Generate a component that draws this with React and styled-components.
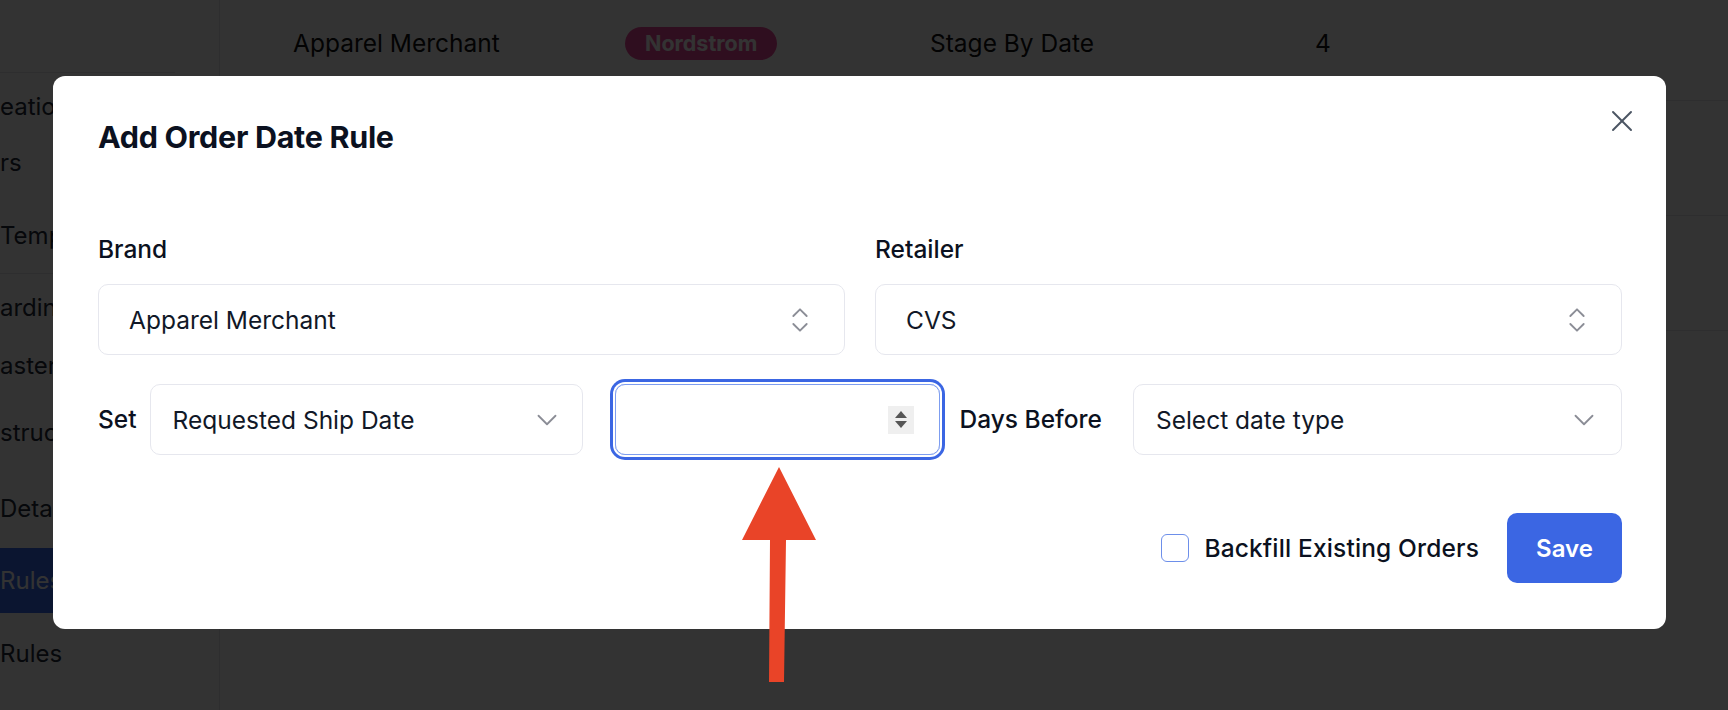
import React from 'react';
import styled, { createGlobalStyle } from 'styled-components';
import { X, ChevronsUpDown, ChevronDown } from 'lucide-react';

const GlobalStyle = createGlobalStyle`
  * { box-sizing: border-box; }
  body {
    margin: 0;
    font-family: Inter, "Noto Sans", sans-serif;
    color: #111827;
    overflow: hidden;
  }
`;

const Page = styled.div`
  position: relative;
  display: flex;
  width: 1728px;
  height: 710px;
  background: #ffffff;
  overflow: hidden;
`;

const Sidebar = styled.div`
  width: 220px;
  flex-shrink: 0;
  border-right: 1px solid #e5e7eb;
  padding-top: 72px;
  overflow: hidden;
`;

const SideGroup = styled.div`
  border-top: 1px solid #e5e7eb;
  margin-right: 44px;
  padding-bottom: 18px;
`;

const SideItem = styled.div`
  display: flex;
  align-items: center;
  height: ${p => (p.$active ? 65 : 40)}px;
  margin-top: ${p => p.$mt}px;
  margin-right: ${p => (p.$active ? -44 : 0)}px;
  font-size: 24px;
  white-space: nowrap;
  color: ${p => (p.$active ? '#ffffff' : '#1f2937')};
  background: ${p => (p.$active ? '#3769f0' : 'transparent')};
`;

const Main = styled.div`
  flex: 1;
  margin-top: -14px;
`;

const Row = styled.div`
  display: grid;
  grid-template-columns: 332px 305px 385px 1fr;
  align-items: center;
  height: 115px;
  padding-left: 73px;
  border-bottom: 1px solid #e5e7eb;
  font-size: 24.5px;
  color: #111111;
`;

const Badge = styled.span`
  justify-self: start;
  display: inline-flex;
  align-items: center;
  height: 33px;
  padding: 0 20px;
  border-radius: 17px;
  background: #ec4899;
  color: #ffffff;
  font-weight: 700;
  font-size: 21.5px;
`;

const Overlay = styled.div`
  position: absolute;
  inset: 0;
  background: rgba(0, 0, 0, 0.8);
  display: flex;
  align-items: flex-start;
  padding: 76px 0 0 53px;
`;

const Modal = styled.div`
  position: relative;
  width: 1613px;
  height: 553px;
  background: #ffffff;
  border-radius: 12px;
  padding: 43px 44px 45px 45px;
  display: flex;
  flex-direction: column;
`;

const CloseButton = styled.button`
  position: absolute;
  top: 27px;
  right: 26px;
  display: flex;
  padding: 0;
  border: none;
  background: none;
  color: #4b5563;
`;

const Title = styled.h2`
  margin: 0;
  font-size: 30.5px;
  line-height: 36px;
  font-weight: 700;
  color: #0b1120;
  letter-spacing: -0.3px;
`;

const TwoCols = styled.div`
  display: grid;
  grid-template-columns: 1fr 1fr;
  gap: 30px;
  margin-top: 80px;
`;

const Field = styled.div`
  display: flex;
  flex-direction: column;
  gap: 20px;
`;

const Label = styled.span`
  font-size: 24.5px;
  line-height: 29px;
  font-weight: 500;
  color: #0b1120;
  white-space: nowrap;
  margin-right: ${p => p.$mr || 0}px;
`;

const Select = styled.div`
  display: flex;
  align-items: center;
  justify-content: space-between;
  height: 71px;
  flex-shrink: 0;
  width: ${p => (p.$w ? `${p.$w}px` : 'auto')};
  flex-grow: ${p => (p.$grow ? 1 : 0)};
  padding: 0 ${p => p.$pr}px 0 ${p => p.$pl}px;
  border: 1px solid #e6e7ee;
  border-radius: 10px;
  background: #ffffff;
  font-size: 24.5px;
  color: #111827;
  white-space: nowrap;
  svg { color: #8b8d96; flex-shrink: 0; }
`;

const SetRow = styled.div`
  display: flex;
  align-items: center;
  margin-top: 29px;
`;

const NumberField = styled.div`
  display: flex;
  align-items: center;
  justify-content: flex-end;
  flex-shrink: 0;
  width: 325px;
  height: 71px;
  margin: 0 20px 0 32px;
  padding-right: 25px;
  border: 1px solid #7d9df0;
  border-radius: 10px;
  box-shadow: 0 0 0 2px #ffffff, 0 0 0 5px #3b66e3;
`;

const Spinner = styled.div`
  display: flex;
  flex-direction: column;
  align-items: center;
  justify-content: center;
  gap: 3px;
  width: 26px;
  height: 28px;
  background: #efefef;
`;

const Footer = styled.div`
  display: flex;
  align-items: center;
  justify-content: flex-end;
  margin-top: 58px;
`;

const Checkbox = styled.span`
  width: 28px;
  height: 28px;
  border: 1.5px solid #6d8fea;
  border-radius: 6px;
  margin-right: 15px;
`;

const CheckLabel = styled.span`
  font-size: 24.5px;
  font-weight: 500;
  color: #0b1120;
  margin-right: 28px;
  letter-spacing: 0.15px;
`;

const SaveButton = styled.button`
  width: 115px;
  height: 70px;
  border: none;
  border-radius: 10px;
  background: #3b66e3;
  color: #ffffff;
  font-family: inherit;
  font-size: 24px;
  font-weight: 600;
`;

const ArrowSvg = styled.svg`
  position: absolute;
  left: 735px;
  top: 460px;
`;

const sideGroups = [
  [
    { text: 'eatio', mt: 13 },
    { text: 'rs', mt: 16 },
    { text: 'Temp', mt: 33 },
  ],
  [
    { text: 'ardin', mt: 13 },
    { text: 'aster', mt: 18 },
    { text: 'struc', mt: 27 },
    { text: 'Deta', mt: 36 },
    { text: 'Rules', mt: 20, active: true },
    { text: 'Rules', mt: 20 },
  ],
];

const rows = [
  ['Apparel Merchant', 'Nordstrom', 'Stage By Date', '4'],
  null,
  null,
];

const Triangle = ({ up }) => (
  <svg width="12" height="7" viewBox="0 0 12 7">
    <polygon points={up ? '6,0 12,7 0,7' : '0,0 12,0 6,7'} fill="#555555" />
  </svg>
);

export default function App() {
  return (
    <Page>
      <GlobalStyle />
      <Sidebar>
        {sideGroups.map((group, gi) => (
          <SideGroup key={gi}>
            {group.map((item, i) => (
              <SideItem key={i} $mt={item.mt} $active={item.active}>{item.text}</SideItem>
            ))}
          </SideGroup>
        ))}
      </Sidebar>
      <Main>
        {rows.map((r, i) => (
          <Row key={i}>
            {r && (
              <>
                <span>{r[0]}</span>
                <Badge>{r[1]}</Badge>
                <span>{r[2]}</span>
                <span>{r[3]}</span>
              </>
            )}
          </Row>
        ))}
      </Main>

      <Overlay>
        <Modal>
          <CloseButton aria-label="Close">
            <X size={36} strokeWidth={1.3} />
          </CloseButton>
          <Title>Add Order Date Rule</Title>

          <TwoCols>
            <Field>
              <Label>Brand</Label>
              <Select $pl={30} $pr={28}>
                Apparel Merchant
                <ChevronsUpDown size={32} strokeWidth={1.4} />
              </Select>
            </Field>
            <Field>
              <Label>Retailer</Label>
              <Select $pl={30} $pr={28}>
                CVS
                <ChevronsUpDown size={32} strokeWidth={1.4} />
              </Select>
            </Field>
          </TwoCols>

          <SetRow>
            <Label $mr={13}>Set</Label>
            <Select $w={433} $pl={22} $pr={18}>
              Requested Ship Date
              <ChevronDown size={34} strokeWidth={1.3} />
            </Select>
            <NumberField>
              <Spinner>
                <Triangle up />
                <Triangle />
              </Spinner>
            </NumberField>
            <Label $mr={31}>Days Before</Label>
            <Select $grow $pl={22} $pr={20}>
              Select date type
              <ChevronDown size={34} strokeWidth={1.3} />
            </Select>
          </SetRow>

          <Footer>
            <Checkbox />
            <CheckLabel>Backfill Existing Orders</CheckLabel>
            <SaveButton>Save</SaveButton>
          </Footer>
        </Modal>
      </Overlay>

      <ArrowSvg width="90" height="230" viewBox="0 0 90 230">
        <polygon
          points="44,7 81,80 51,80 49,222 34,222 35,80 7,80"
          fill="#e94428"
        />
      </ArrowSvg>
    </Page>
  );
}
